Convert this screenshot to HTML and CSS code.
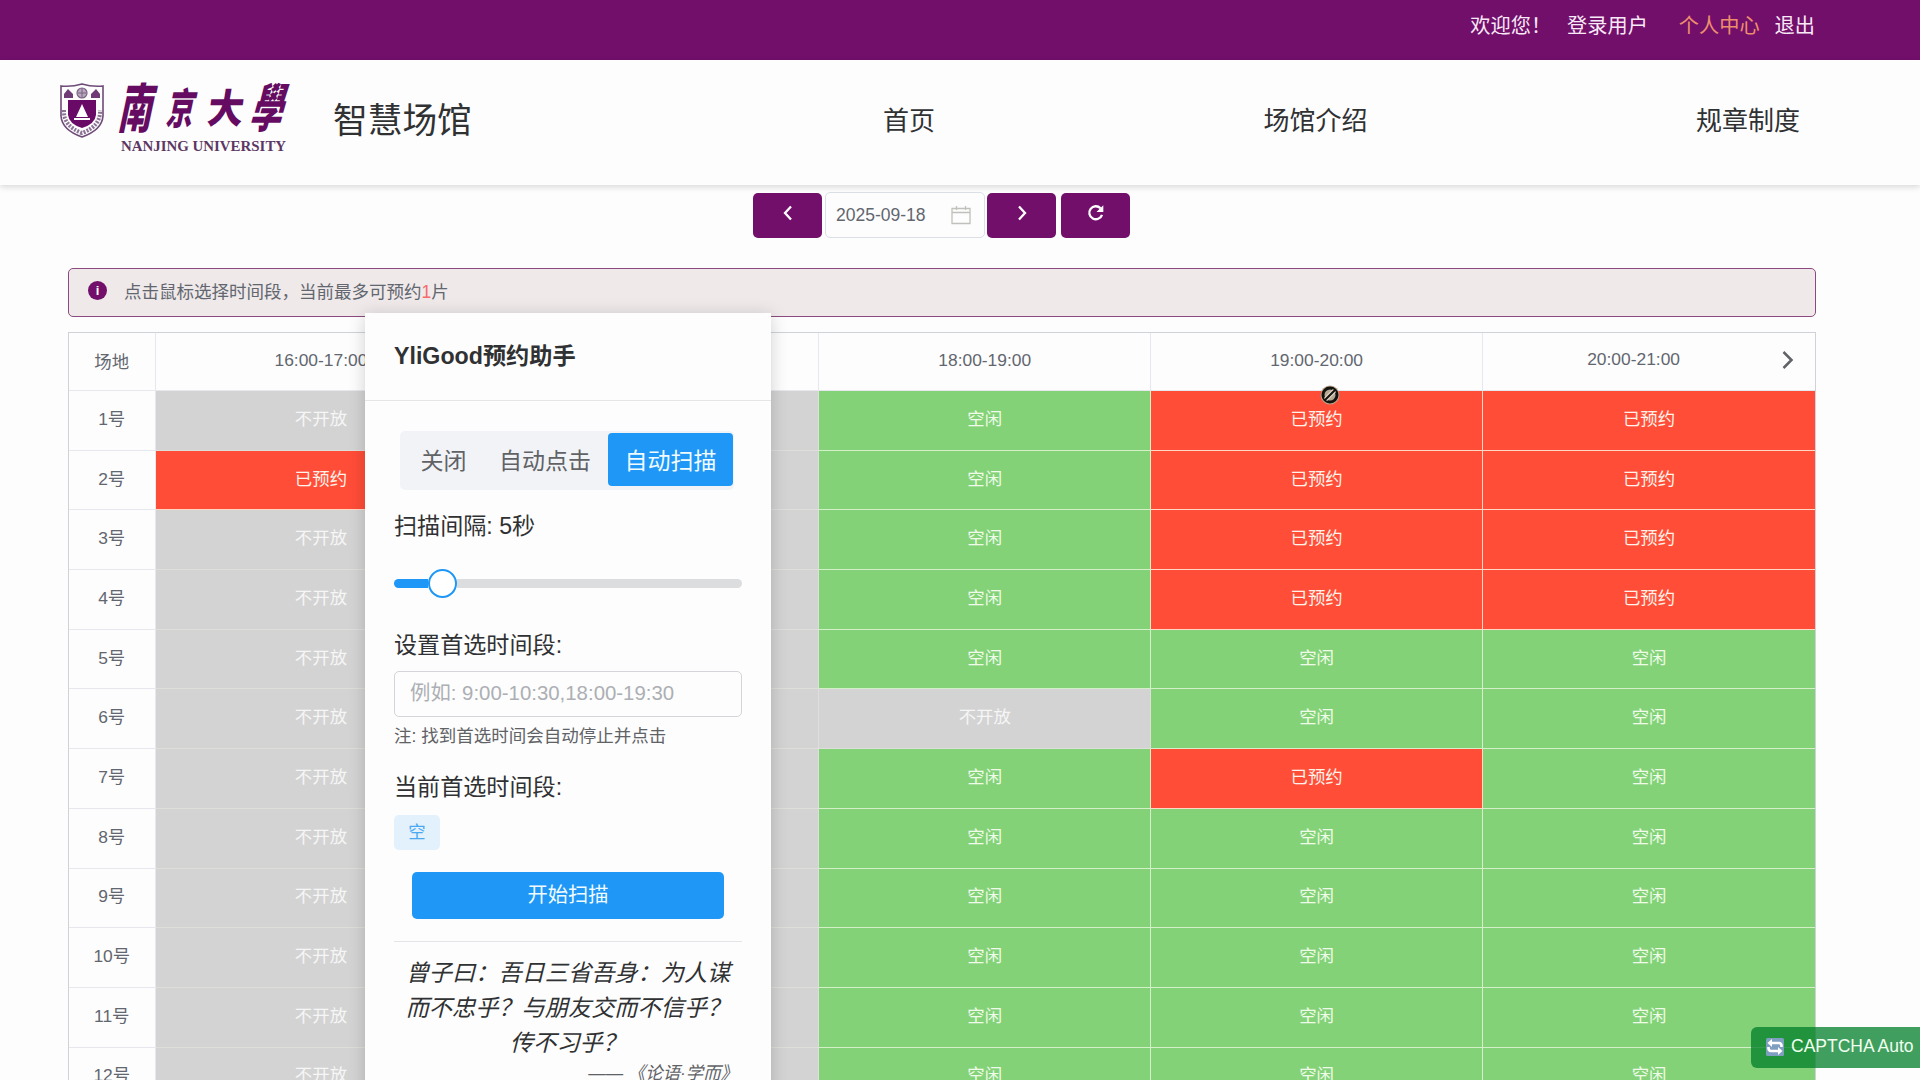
FILE: index.html
```html
<!DOCTYPE html>
<html lang="zh-CN">
<head>
<meta charset="utf-8">
<title>智慧场馆</title>
<link rel="stylesheet" href="styles.css">
</head>
<body>
<div class="topbar"><span class="welcome">欢迎您！</span><span class="user">登录用户</span><span class="center">个人中心</span><span>退出</span></div>
<header class="header">
  <div class="logo">
    <svg class="shield" width="44" height="56" viewBox="0 0 44 56">
      <path d="M1 3Q12 4 22 1Q32 4 43 3V33Q42 47 22 54Q2 47 1 33Z" fill="#fdfdfd" stroke="#6f4c78" stroke-width="1.6"/>
      <path d="M4 27Q3 43 22 50Q41 43 40 27" fill="none" stroke="#8b7395" stroke-width="4" stroke-dasharray="2 1.3"/>
      <path d="M8 17H36V32Q35 41 22 45Q9 41 8 32Z" fill="#690b66"/>
      <path d="M22 21L28 34H16ZM14 35H30V37H14Z" fill="#fff"/>
      <path d="M4 15V11L8 6L13 11V15ZM31 15V11L36 6L40 11V15Z" fill="#6f3a75"/>
      <circle cx="22" cy="10" r="5" fill="#b9a9bf" stroke="#7b6283" stroke-width="1.2"/>
      <path d="M18 10H26M22 5V15" stroke="#7b6283"/>
    </svg>
    <div class="wordmark">
      <div class="calligraphy"><span class="c1">南</span><span class="c2">京</span><span class="c3">大</span><span class="c4">學</span></div>
      <div class="latin">NANJING UNIVERSITY</div>
    </div>
  </div>
  <div class="brand">智慧场馆</div>
  <nav class="nav"><span>首页</span><span>场馆介绍</span><span>规章制度</span></nav>
</header>
<div class="datebar">
  <button class="pbtn"><svg width="20" height="20" viewBox="0 0 20 20"><path d="M13 3.5L7 10l6 6.500"/></svg></button>
  <div class="date"><span>2025-09-18</span><svg width="20" height="20" viewBox="0 0 20 20"><path d="M1 3.500H19V18.500H1ZM1 7.500H19M5.500 1V5M14.500 1V5"/></svg></div>
  <button class="pbtn next"><svg width="20" height="20" viewBox="0 0 20 20"><path d="M7 3.500L13 10l-6 6.500"/></svg></button>
  <button class="pbtn"><svg width="20" height="20" viewBox="0 0 20 20"><path d="M14.500 5.200A6.500 6.500 0 1 0 16 11.800"/><path class="tip" d="M17.300 2.300V9H10.500Z"/></svg></button>
</div>
<div class="alert"><i>i</i><span>点击鼠标选择时间段，当前最多可预约<b>1</b>片</span></div>
<main class="table" id="table"></main>
<section class="panel">
  <h2>YliGood预约助手</h2>
  <div class="body">
    <div class="modes"><span>关闭</span><span>自动点击</span><span class="on">自动扫描</span></div>
    <div class="label scan">扫描间隔: 5秒</div>
    <div class="slider"><div class="fill"></div><div class="thumb"></div><div class="rail"></div></div>
    <div class="label">设置首选时间段:</div>
    <div class="input">例如: 9:00-10:30,18:00-19:30</div>
    <div class="note">注: 找到首选时间会自动停止并点击</div>
    <div class="label">当前首选时间段:</div>
    <div class="tag">空</div>
    <div class="start">开始扫描</div>
    <div class="quote">曾子曰：吾日三省吾身：为人谋<br>而不忠乎？与朋友交而不信乎？<br>传不习乎？</div>
    <div class="source">—— 《论语·学而》</div>
  </div>
</section>
<svg class="cursor" width="20" height="20" viewBox="0 0 20 20"><circle cx="10" cy="10" r="9.500" fill="#b9a58c"/><circle cx="10" cy="10" r="7" fill="#b5a894" stroke="#15130f" stroke-width="3"/><path d="M5.500 14.500L14.500 5.500" stroke="#e8dcc8" stroke-width="4.500"/><path d="M5 15L15 5" stroke="#15130f" stroke-width="2.200"/></svg>
<div class="toast"><svg width="18" height="18" viewBox="0 0 18 18"><rect width="18" height="18" rx="1.500" fill="#7f9fc0"/><path d="M15.500 9V8Q15.500 5 13 5H5M2.500 9v1Q2.500 13 5 13H13" fill="none" stroke="#fff" stroke-width="2.600"/><path d="M6 1V9L1.500 5ZM12 9v8l4.500-4Z" fill="#fff"/></svg><span>CAPTCHA Auto</span></div>
<script src="app.js"></script>
</body>
</html>
```
FILE: styles.css
```css
* { box-sizing: border-box; }
body { margin: 0; width: 1920px; height: 1080px; overflow: hidden; position: relative; background: #fdfdfd; color: #62666f; font-family: "Liberation Sans", "Noto Sans CJK SC", sans-serif; font-size: 17.4px; }
.topbar { height: 60px; padding: 0 105px 12px 0; background: #720f6b; color: #f8e9f7; font-size: 20.2px; display: flex; justify-content: flex-end; align-items: center; }
.welcome { margin-right: 16px; }
.user { margin-right: 31px; }
.center { color: #ee8f6b; margin-right: 15px; }
.header { height: 125px; padding-left: 60px; display: flex; background: #fdfdfd; box-shadow: 0 2px 6px rgba(0,0,0,.15); }
.logo { width: 273px; display: flex; gap: 14px; padding-top: 18px; }
.shield { margin-top: 5px; }
.calligraphy { display: flex; height: 61px; width: 172px; justify-content: space-between; align-items: center; color: #650c62; font-size: 40px; font-weight: 900; line-height: 60px; }
.calligraphy span { display: block; }
.c1 { transform: skewX(-12deg) scale(.84, 1.35); }
.c2 { transform: skewX(-12deg) scale(.68, 1.06); }
.c3 { transform: skewX(-8deg) scale(.9, 1); }
.c4 { transform: skewX(-16deg) scale(.8, 1.3); }
.latin { margin-left: 3px; color: #5c3763; font: bold 14.900px/14px "Liberation Serif", serif; white-space: nowrap; }
.brand { width: 546px; color: #303133; font-size: 34.700px; line-height: 122px; }
.nav { width: 921px; display: flex; justify-content: space-between; padding-left: 4px; color: #303133; font-size: 26px; line-height: 122px; }
.datebar { height: 83px; padding: 7px 0 0 753px; display: flex; }
.pbtn { width: 69px; height: 45px; margin: 1px 0 0; padding: 0 0 5px; border: 0; border-radius: 5px; background: #720f6b; display: flex; align-items: center; justify-content: center; }
.pbtn + .pbtn { margin-left: 5px; }
.pbtn svg { fill: none; stroke: #fff; stroke-width: 2.300; }
.pbtn .tip { fill: #fff; stroke: none; }
.date { width: 160px; height: 46px; margin: 0 2px 0 3px; padding: 0 13px 0 10px; border: 1px solid #dcdfe6; border-radius: 5px; background: #fdfdfd; display: flex; align-items: center; justify-content: space-between; font-size: 17.500px; }
.date svg { fill: none; stroke: #c0c0bc; stroke-width: 1.300; }
.alert { width: 1748px; height: 49px; margin-left: 68px; padding: 0 0 5px 19px; border: 1px solid #8c4a80; border-radius: 5px; background: #efe9ea; display: flex; align-items: center; gap: 17px; }
.alert span { font-size: 17.5px; }
.alert i { width: 19px; height: 19px; border-radius: 50%; background: #720f6b; color: #fff; font: bold 13px/19px "Liberation Sans", sans-serif; text-align: center; }
.alert b { color: #f56c6c; font-weight: 400; }
.table { width: 1748px; margin: 15px 0 0 68px; border: 1px solid #d0d2da; border-bottom: 0; background: #fdfdfd; }
.row { height: 59.700px; display: grid; grid-template-columns: 86.500px repeat(4, 331.900px) 1fr; }
.row.head { height: 58px; }
.cell { border: solid #e6e8ee; border-width: 0 1px 1px 0; display: flex; align-items: center; justify-content: center; padding-bottom: 6px; }
.head .cell { padding-bottom: 3px; }
.head .cell:last-child { justify-content: flex-end; gap: 100px; padding: 0 19px 4px 0; }
.off, .free, .full { border-bottom-width: 1.500px; }
.off { background: #d3d3d3; color: #f6f6f6; border-color: #dededa; }
.free { background: #84d278; color: #effbe8; border-color: #d4f0c8; }
.full { background: #ff4d38; color: #fff2e8; border-color: #ffd8c4; }
.row .cell:last-child { border-right: 0; }
.panel { position: absolute; left: 365px; top: 313px; width: 406px; height: 800px; background: #fdfdfd; color: #303133; box-shadow: 0 2px 16px rgba(0,0,0,.18); }
.panel h2 { margin: 0; height: 88px; padding-left: 29px; border-bottom: 1px solid #e6e6e6; font-size: 23.200px; line-height: 86px; }
.body { padding: 30px 29px 0; }
.modes { width: 334px; height: 59px; margin-left: 6px; padding: 2px 1px 4px 5px; border-radius: 5px; background: #f2f3f6; display: flex; color: #606266; font-size: 23px; line-height: 56px; }
.modes span { width: 77px; text-align: center; }
.modes span + span { width: 126px; }
.modes span.on { width: 125px; background: #1f97f6; color: #f0fbff; border-radius: 4px; height: 53px; }
.label { padding-left: 0; font-size: 23.100px; line-height: 39px; height: 40px; }
.scan { margin-top: 17px; }
.slider { height: 30px; margin: 21px 0 28px; display: flex; align-items: center; }
.fill { width: 34px; height: 9px; border-radius: 5px 0 0 5px; background: #1f97f6; }
.thumb { width: 29px; height: 29px; border: 2px solid #1f97f6; border-radius: 50%; background: #fff; }
.rail { flex: 1; height: 9px; border-radius: 0 5px 5px 0; background: #dcdddf; }
.input { height: 46px; margin-top: 5px; padding-left: 15px; border: 1px solid #d3d5da; border-radius: 5px; color: #acafb4; font-size: 20.400px; line-height: 43px; }
.note { height: 38px; line-height: 38px; margin-bottom: 13px; color: #606266; font-size: 17.500px; }
.tag { width: 46px; height: 35px; margin-top: 7px; border-radius: 5px; background: #e2f1fc; color: #4ba9ef; text-align: center; line-height: 35px; }
.start { width: 312px; height: 47px; margin: 22px 0 22px 18px; border-radius: 5px; background: #1f97f6; color: #f0fbff; font-size: 20.300px; line-height: 46px; text-align: center; }
.quote { border-top: 1px solid #e4e5e8; padding-top: 14px; font-size: 23.200px; line-height: 35px; font-style: italic; text-align: center; white-space: nowrap; }
.source { padding-right: 4px; font-style: italic; color: #606266; text-align: right; line-height: 25px; }
.cursor { position: absolute; left: 1320px; top: 385px; }
.toast { position: absolute; left: 1751px; top: 1027px; width: 169px; height: 41px; padding: 0 0 2px 15px; border-radius: 6px 0 0 6px; background: rgba(0,125,40,.75); color: #f0fff0; display: flex; align-items: center; gap: 7px; font-size: 17.500px; white-space: nowrap; }
```
FILE: app.js
```js
const labels = { x: ['off', '不开放'], o: ['free', '空闲'], r: ['full', '已预约'], _: ['off', ''] };
const rows = ['x_orr', 'r_orr', 'x_orr', 'x_orr', 'x_ooo', 'x_xoo', 'x_oro', 'x_ooo', 'x_ooo', 'x_ooo', 'x_ooo', 'x_ooo'];
const cell = (cls, html) => `<div class="cell ${cls}">${html}</div>`;
const arrow = '<svg width="16" height="20" viewBox="0 0 16 20"><path d="M3.500 2L11.500 10l-8 8" fill="none" stroke="#606266" stroke-width="2.500"/></svg>';
const times = ['16:00-17:00', '', '18:00-19:00', '19:00-20:00', '20:00-21:00'];
let html = '<div class="row head">' + cell('', '场地');
times.forEach((t, i) => { html += cell('', `<span>${t}</span>` + (i === 4 ? arrow : '')); });
html += '</div>';
rows.forEach((r, i) => {
  html += '<div class="row">' + cell('', `${i + 1}号`) + [...r].map(k => cell(...labels[k])).join('') + '</div>';
});
document.getElementById('table').innerHTML = html;
```
